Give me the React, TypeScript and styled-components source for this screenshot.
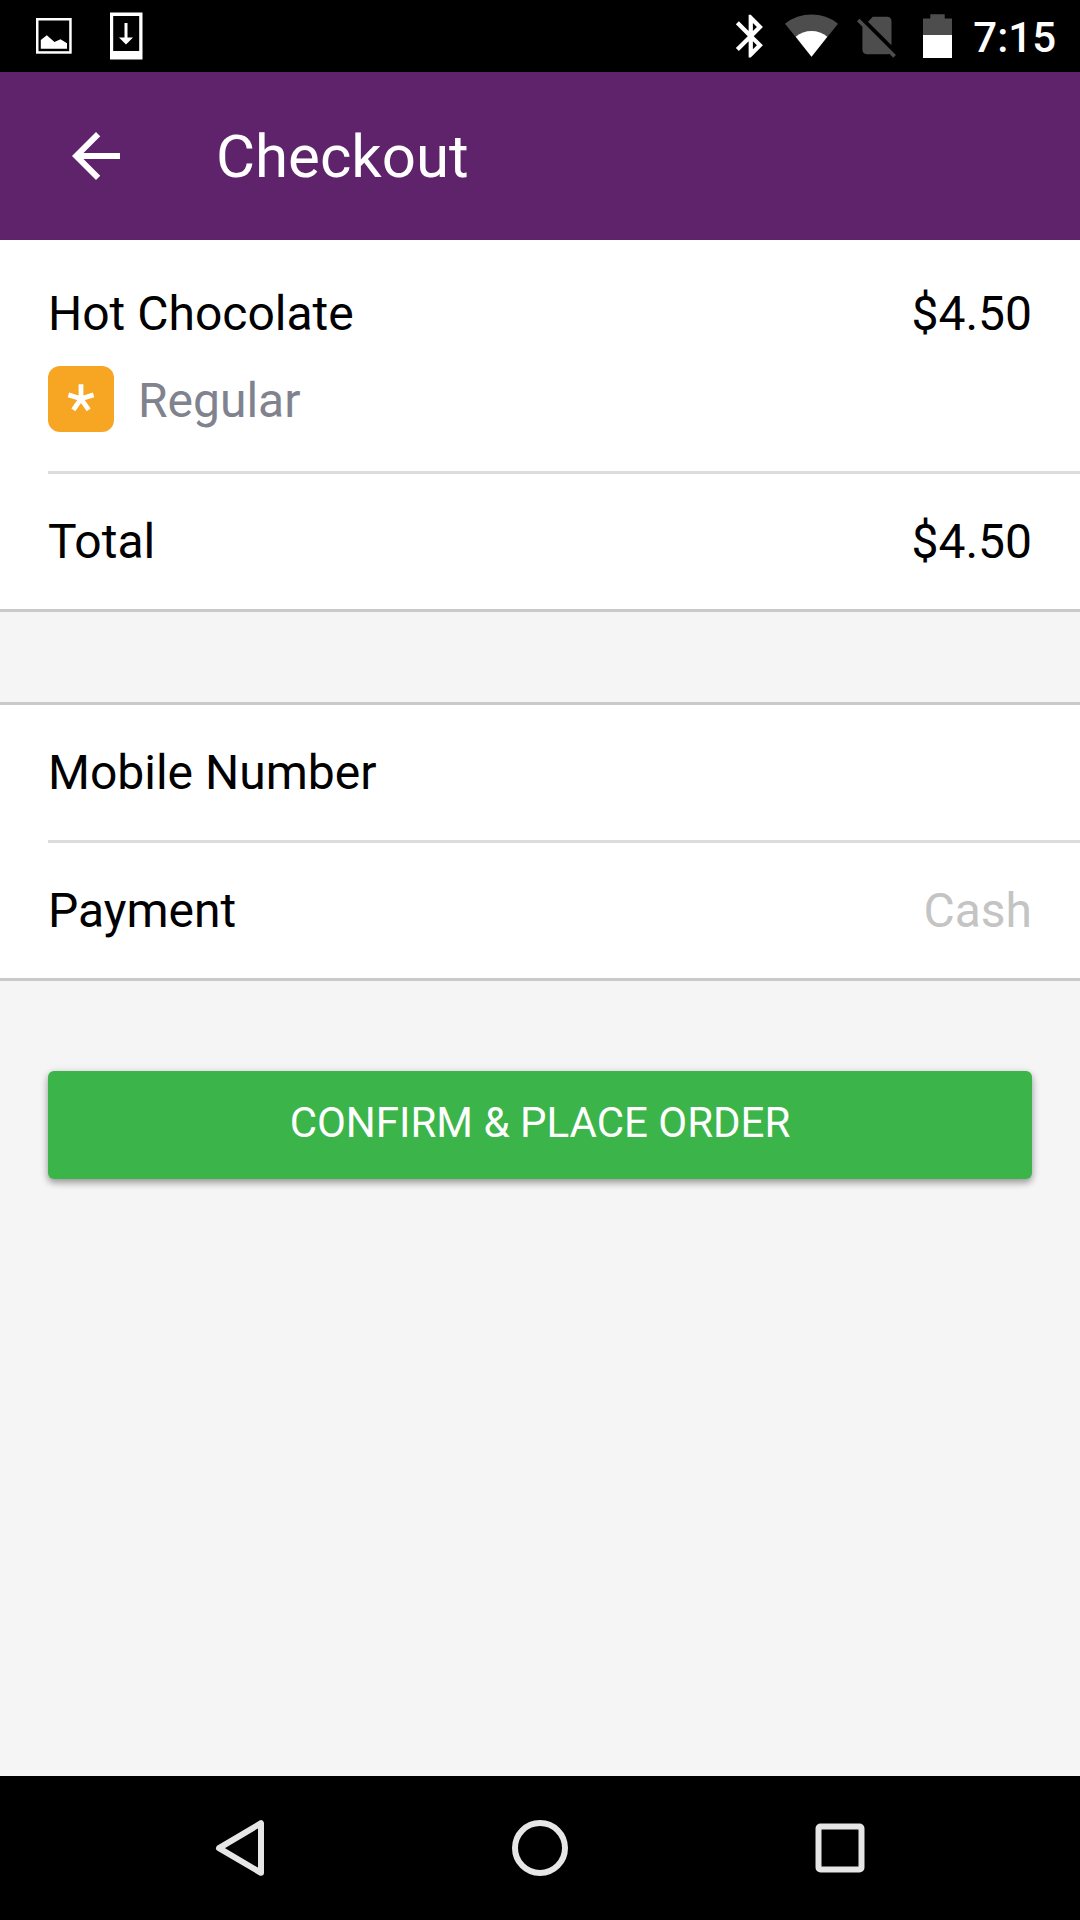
import React from 'react';
import styled, { createGlobalStyle } from 'styled-components';

const GlobalStyle = createGlobalStyle`
  *, *::before, *::after { box-sizing: border-box; }
  body { margin: 0; background: #f5f5f5; }
`;

const Screen = styled.div`
  display: flex;
  flex-direction: column;
  width: 1080px;
  height: 1920px;
  background: #f5f5f5;
  color: #000;
  font-family: Roboto, 'Liberation Sans', sans-serif;
  font-size: 48px;
`;

const StatusBar = styled.div`
  display: flex;
  justify-content: space-between;
  height: 72px;
  padding: 0 24px 0 36px;
  background: #000;
`;

const StatusGroup = styled.div`
  display: flex;
`;

const StatusIcon = styled.svg<{ $after?: number }>`
  display: block;
  flex: none;
  height: 72px;
  margin-right: ${({ $after = 0 }) => $after}px;
`;

const Clock = styled.time`
  padding-top: 3px;
  color: #fff;
  font-size: 42px;
  font-weight: 500;
  line-height: 70px;
`;

const AppBar = styled.header`
  display: flex;
  align-items: center;
  height: 168px;
  padding-left: 60px;
  background: #5f236b;
`;

const BackButton = styled.button`
  display: block;
  width: 72px;
  height: 72px;
  margin-right: 84px;
  padding: 0;
  border: 0;
  background: none;
`;

const Title = styled.h1`
  margin: 0;
  color: #fff;
  font-size: 60px;
  font-weight: 400;
  line-height: 71px;
`;

const Section = styled.section<{ $topLine?: boolean }>`
  border-top: ${({ $topLine }) => ($topLine ? '3px solid #cacaca' : '0')};
  border-bottom: 3px solid #cacaca;
  padding-left: 48px;
  background: #fff;
`;

const Item = styled.div`
  height: 234px;
  padding: 45px 48px 0 0;
  border-bottom: 3px solid #dcdcdc;
`;

const ItemLine = styled.div`
  display: flex;
  justify-content: space-between;
  line-height: 57px;
`;

const Option = styled.div`
  display: flex;
  align-items: center;
  gap: 24px;
  margin-top: 24px;
  color: #80838d;
`;

const OptionBadge = styled.span`
  width: 66px;
  height: 66px;
  border-radius: 12px;
  background: #f6a623;
`;

const OptionName = styled.span`
  padding-top: 3px;
  line-height: 57px;
`;

const Row = styled.div<{ $divided?: boolean }>`
  display: flex;
  align-items: center;
  justify-content: space-between;
  height: ${({ $divided }) => ($divided ? 138 : 135)}px;
  padding-right: 48px;
  border-bottom: ${({ $divided }) => ($divided ? '3px solid #dcdcdc' : '0')};
  line-height: 57px;
`;

const Placeholder = styled.span`
  color: #c4c4c4;
`;

const Spacer = styled.div`
  height: 90px;
`;

const ConfirmButton = styled.button`
  height: 108px;
  margin: 90px 48px 0;
  padding: 0 0 5px;
  border: 0;
  border-radius: 6px;
  background: #3bb54a;
  box-shadow: 0 4px 7px rgba(0, 0, 0, 0.32), 0 1px 10px rgba(0, 0, 0, 0.1);
  color: #fff;
  font-family: inherit;
  font-size: 42px;
  line-height: 49px;
`;

const NavBar = styled.nav`
  display: flex;
  align-items: center;
  justify-content: center;
  gap: 228px;
  height: 144px;
  margin-top: auto;
  background: #000;
`;

const NavIcon = styled.svg`
  display: block;
  width: 72px;
  height: 72px;
  fill: none;
  stroke: #e6e6e6;
  stroke-width: 6px;
  stroke-linejoin: round;
`;

export default function App() {
  return (
    <>
      <GlobalStyle />
      <Screen>
        <StatusBar>
          <StatusGroup>
            <StatusIcon width="36" viewBox="0 0 36 72" $after={38}>
              <rect x="1.25" y="19.25" width="33.2" height="33.2" fill="none" stroke="#fff" strokeWidth="2.5" />
              <path d="M4.800 48.800V40l6-4.800 7.700 6.800 6-2.700 6.500 4v5.500z" fill="#fff" />
            </StatusIcon>
            <StatusIcon width="33" viewBox="0 0 33 72">
              <path d="M0 12.500h32.500v47H0zM3.200 16v35h26V16z" fill="#fff" fillRule="evenodd" />
              <path d="M14.500 23h3v14.500h5.500L16 44.500 9 37.500h5.500z" fill="#fff" />
            </StatusIcon>
          </StatusGroup>
          <StatusGroup>
            <StatusIcon width="28" viewBox="0 0 28 72" $after={22}>
              <path
                transform="translate(-9.800 10.600) scale(2.13)"
                fill="#fff"
                d="M17.710 7.710L12 2h-1v7.590L6.410 5 5 6.410 10.590 12 5 17.590 6.410 19 11 14.410V22h1l5.710-5.710L13.410 12l4.300-4.290zM13 5.830l1.880 1.880L13 9.590V5.830zm1.880 10.460L13 18.170v-3.760l1.880 1.880z"
              />
            </StatusIcon>
            <StatusIcon width="53" viewBox="0 0 53 72" $after={18}>
              <path d="M26.500 56.800L0 23.700A42.800 42.800 0 0 1 53 23.700z" fill="#4d4d4d" />
              <path d="M26.500 56.800L10.700 36.700A25 25 0 0 1 42.300 36.700z" fill="#fff" />
            </StatusIcon>
            <StatusIcon width="40" viewBox="0 0 40 72" $after={27}>
              <path
                transform="translate(-4 10.600) scale(2.08)"
                fill="#4d4d4d"
                d="M18.990 5c0-1.100-.89-2-1.990-2h-7L7.660 5.340 19 16.680 18.990 5zM3.650 3.880L2.380 5.150 5 7.770V19c0 1.100.9 2 2.010 2H17c.35 0 .67-.1.96-.26l1.880 1.880 1.270-1.270L3.650 3.880z"
              />
            </StatusIcon>
            <StatusIcon width="29" viewBox="0 0 29 72" $after={21}>
              <path d="M0 36V18.500h7.300V14.300h14.400v4.200H29V36z" fill="#4d4d4d" />
              <path d="M0 35h29v23H0z" fill="#fff" />
            </StatusIcon>
            <Clock>7:15</Clock>
          </StatusGroup>
        </StatusBar>

        <AppBar>
          <BackButton aria-label="Back">
            <svg width="72" height="72" viewBox="0 0 24 24" fill="#fff" display="block">
              <path d="M20 11H7.830l5.590-5.590L12 4l-8 8 8 8 1.410-1.410L7.830 13H20v-2z" />
            </svg>
          </BackButton>
          <Title>Checkout</Title>
        </AppBar>

        <Section>
          <Item>
            <ItemLine>
              <span>Hot Chocolate</span>
              <span>$4.50</span>
            </ItemLine>
            <Option>
              <OptionBadge>
                <svg width="66" height="66" viewBox="0 0 66 66" display="block" stroke="#fff" strokeWidth="4.8">
                  <path d="M33 32.800V18.200M33 32.800L20.400 28.900M33 32.800L45.600 28.900M33 32.800L25.300 43.800M33 32.800L40.700 43.800" />
                </svg>
              </OptionBadge>
              <OptionName>Regular</OptionName>
            </Option>
          </Item>
          <Row>
            <span>Total</span>
            <span>$4.50</span>
          </Row>
        </Section>

        <Spacer />

        <Section $topLine>
          <Row $divided>
            <span>Mobile Number</span>
          </Row>
          <Row>
            <span>Payment</span>
            <Placeholder>Cash</Placeholder>
          </Row>
        </Section>

        <ConfirmButton>CONFIRM &amp; PLACE ORDER</ConfirmButton>

        <NavBar>
          <NavIcon viewBox="0 0 72 72">
            <path d="M15 36.200L57 11.200V60.800z" />
          </NavIcon>
          <NavIcon viewBox="0 0 72 72">
            <circle cx="36" cy="36" r="25" />
          </NavIcon>
          <NavIcon viewBox="0 0 72 72">
            <rect x="14.500" y="14.500" width="43" height="43" rx="2" />
          </NavIcon>
        </NavBar>
      </Screen>
    </>
  );
}
